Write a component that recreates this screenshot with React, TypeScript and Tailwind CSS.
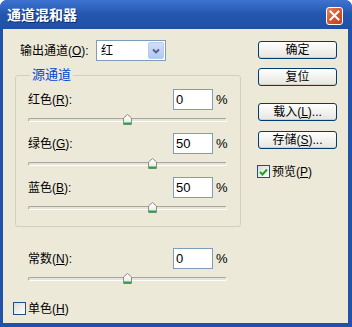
import React from "react";

const FONT = '"Liberation Sans", "Noto Sans CJK SC", sans-serif';

function U({ c }: { c: string }) {
  return <span className="underline underline-offset-[1px]">{c}</span>;
}

function Slider({ value }: { value: number }) {
  const left = 95 + (value / 400) * 199;
  return (
    <div className="relative w-[199px] h-[23px]">
      <div className="absolute left-0 right-0 top-[8px] h-[4px] rounded-[2px] border border-[#a6a69c] border-b-white border-r-white bg-[#e6e4d8]" />
      <svg
        className="absolute top-[4px]"
        style={{ left }}
        width="9"
        height="11"
        viewBox="0 0 9 11"
      >
        <defs>
          <linearGradient id="tg" x1="0" y1="0" x2="0" y2="1">
            <stop offset="0" stopColor="#ffffff" />
            <stop offset="1" stopColor="#e8e8e0" />
          </linearGradient>
        </defs>
        <path d="M4.5 0.5 L8.5 4 L8.5 10.5 L0.5 10.5 L0.5 4 Z" fill="url(#tg)" stroke="#8c8c84" />
        <rect x="1" y="8.5" width="7" height="2" fill="#1fa54a" />
      </svg>
    </div>
  );
}

function ValueRow({
  label,
  k,
  value,
}: {
  label: string;
  k: string;
  value: string;
}) {
  return (
    <div className="flex items-center h-[21px]">
      <span className="w-[145px]">
        {label}(<U c={k} />):
      </span>
      <div className="w-[40px] h-[21px] border border-[#7f9db9] bg-white flex items-center pl-[2px] text-[13px]">
        {value}
      </div>
      <span className="ml-[3px] text-[13px]">%</span>
    </div>
  );
}

function XpButton({ children }: { children: React.ReactNode }) {
  return (
    <div className="w-[79px] h-[18px] rounded-[3px] border border-[#003c74] bg-gradient-to-b from-white to-[#e6e5de] flex items-center justify-center leading-none shadow-[inset_0_-1px_0_#d6d0c5]">
      {children}
    </div>
  );
}

export default function App() {
  return (
    <div
      className="w-[352px] h-[327px] bg-white text-[12px] text-black"
      style={{ fontFamily: FONT }}
    >
      <div className="w-[352px] h-[327px] flex flex-col rounded-t-[7px] bg-[#2152ab] overflow-hidden">
        <div className="h-[29px] flex items-center justify-between pl-[7px] pr-[9px] bg-gradient-to-b from-[#3d73d2] via-[#2456ae] to-[#2050a6]">
          <span className="text-white font-bold text-[14px] leading-none [text-shadow:1px_1px_0_#0c2a6e]">
            通道混和器
          </span>
          <div className="w-[17px] h-[18px] mt-[2px] rounded-[3px] border border-white bg-gradient-to-br from-[#e9825c] via-[#d9542a] to-[#c4421c] flex items-center justify-center">
            <svg width="11" height="11" viewBox="0 0 11 11">
              <path d="M1.5 1.5 L9.5 9.5 M9.5 1.5 L1.5 9.5" stroke="white" strokeWidth="2" strokeLinecap="square" />
            </svg>
          </div>
        </div>
        <div className="flex-1 ml-[3px] mr-[4px] mb-[4px] bg-[#ece9d8] flex">
          <div className="w-[252px] flex flex-col">
            <div className="flex items-center mt-[11px] ml-[17px] h-[21px]">
              <span className="w-[76px]">
                输出通道(<U c="O" />):
              </span>
              <div className="w-[70px] h-[21px] border border-[#7f9db9] bg-white flex items-center justify-between pl-[4px] pr-[1px]">
                <span>红</span>
                <div className="w-[16px] h-[17px] rounded-[2px] bg-gradient-to-b from-[#d2ddf8] to-[#b3c7f3] border border-[#b8cbf2] flex items-center justify-center">
                  <svg width="8" height="6" viewBox="0 0 8 6">
                    <path d="M1 1.5 L4 4.5 L7 1.5" stroke="#4d6185" strokeWidth="1.8" fill="none" />
                  </svg>
                </div>
              </div>
            </div>
            <div className="relative ml-[12px] mt-[14px] w-[226px] h-[152px] border border-[#d0d0bf] rounded-[3px] pt-[13px] pl-[12px]">
              <span className="absolute -top-[9px] left-[14px] px-[2px] bg-[#ece9d8] text-[#0046d5] text-[13px] leading-[16px]">
                源通道
              </span>
              <ValueRow label="红色" k="R" value="0" />
              <Slider value={0} />
              <ValueRow label="绿色" k="G" value="50" />
              <Slider value={50} />
              <ValueRow label="蓝色" k="B" value="50" />
              <Slider value={50} />
            </div>
            <div className="ml-[25px] mt-[21px]">
              <ValueRow label="常数" k="N" value="0" />
              <Slider value={0} />
            </div>
            <div className="flex items-center ml-[10px] mt-[10px] h-[13px]">
              <div className="w-[13px] h-[13px] border border-[#1c5180] bg-gradient-to-br from-[#dcdcd5] to-white" />
              <span className="ml-[2px]">
                单色(<U c="H" />)
              </span>
            </div>
          </div>
          <div className="ml-[3px] flex flex-col pt-[12px]">
            <XpButton>确定</XpButton>
            <div className="mt-[9px]">
              <XpButton>复位</XpButton>
            </div>
            <div className="mt-[17px]">
              <XpButton>
                <span>
                  载入(<U c="L" />)...
                </span>
              </XpButton>
            </div>
            <div className="mt-[10px]">
              <XpButton>
                <span>
                  存储(<U c="S" />)...
                </span>
              </XpButton>
            </div>
            <div className="flex items-center mt-[16px] ml-[-1px] h-[13px]">
              <div className="w-[13px] h-[13px] border border-[#1c5180] bg-gradient-to-br from-[#dcdcd5] to-white flex items-center justify-center">
                <svg width="9" height="8" viewBox="0 0 9 8">
                  <path d="M1 4 L3.5 6.5 L8 1.5" stroke="#21a121" strokeWidth="2" fill="none" />
                </svg>
              </div>
              <span className="ml-[2px]">
                预览(<U c="P" />)
              </span>
            </div>
          </div>
        </div>
      </div>
    </div>
  );
}
